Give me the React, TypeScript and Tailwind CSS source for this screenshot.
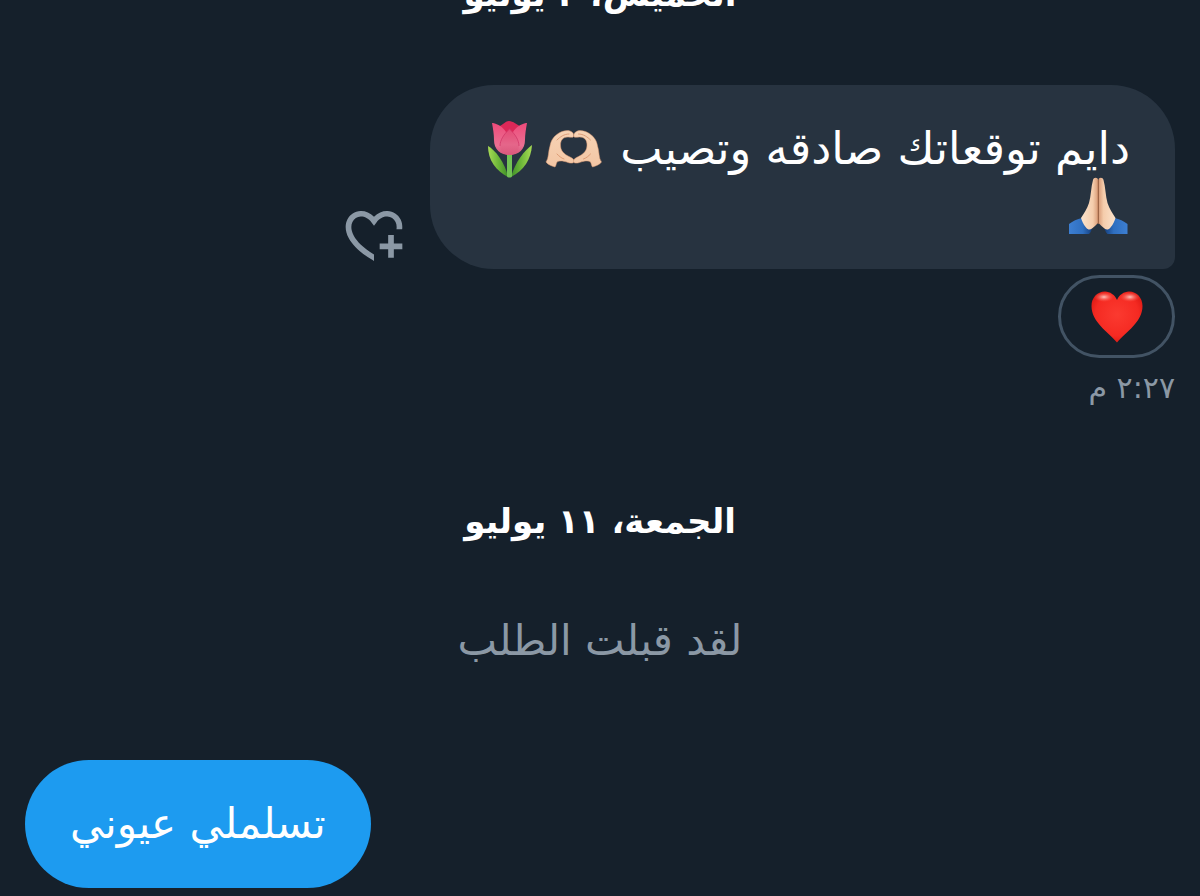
import type { ReactNode } from 'react';

function EmojiBox({ label, children }: { label: string; children: ReactNode }) {
  return (
    <svg
      role="img"
      aria-label={label}
      viewBox="0 2 60 60"
      className="inline-block w-[60px] h-[60px] -my-2 mx-[2px] align-middle overflow-visible"
    >
      {children}
    </svg>
  );
}

function Tulip() {
  return (
    <EmojiBox label="tulip">
      <defs>
        <linearGradient id="petal" x1="0" y1="0" x2="0" y2="1">
          <stop offset="0" stopColor="#e54a76" />
          <stop offset="0.6" stopColor="#e5668a" />
          <stop offset="1" stopColor="#d9587c" />
        </linearGradient>
        <linearGradient id="petalSide" x1="0" y1="0" x2="0" y2="1">
          <stop offset="0" stopColor="#ee4a7a" />
          <stop offset="0.7" stopColor="#ea7092" />
          <stop offset="1" stopColor="#d6557c" />
        </linearGradient>
        <linearGradient id="leafLeft" x1="0" y1="0" x2="1" y2="0">
          <stop offset="0" stopColor="#a8db55" />
          <stop offset="0.5" stopColor="#6fb83a" />
          <stop offset="1" stopColor="#3f8f28" />
        </linearGradient>
        <linearGradient id="leafRight" x1="1" y1="0" x2="0" y2="0">
          <stop offset="0" stopColor="#a8db55" />
          <stop offset="0.5" stopColor="#6fb83a" />
          <stop offset="1" stopColor="#3f8f28" />
        </linearGradient>
      </defs>
      <path d="M8 26C15 30 25 42 28 57 16 51 8 40 8 26z" fill="url(#leafLeft)" />
      <path d="M52 25C45 30 35 42 31 57 44 50 51 40 52 25z" fill="url(#leafRight)" />
      <path d="M27 34h5v22c0 2-5 2-5 0z" fill="#72c255" />
      <path d="M17 7C22 6 25 1 29 1 33 1 37 5 42 7L37 28H22z" fill="#dc2858" />
      <path d="M13 3C18 4 23 7 26 12L30 35C20 35 14 29 14 20 14 14 13 9 12 3z" fill="url(#petalSide)" />
      <path d="M46 3C41 4 36 7 33 12L29 35C39 35 45 29 45 20 45 14 46 9 47 3z" fill="url(#petalSide)" />
      <path d="M29.500 9C35 14 39 20 39 26 39 32 34 35 29.500 35 25 35 20 32 20 26 20 20 24 14 29.500 9z" fill="url(#petal)" />
      <path d="M29.500 9C24 14 20 20 20 26M29.500 9C35 14 39 20 39 26" fill="none" stroke="#d2386a" strokeWidth="0.800" />
    </EmojiBox>
  );
}

function HeartHands() {
  return (
    <EmojiBox label="heart hands">
      <defs>
        <linearGradient id="hand" x1="0" y1="0" x2="0" y2="1">
          <stop offset="0" stopColor="#f6d3b5" />
          <stop offset="1" stopColor="#f3c6a4" />
        </linearGradient>
        <path
          id="halfHands"
          d="M2 42C5 38 4 32 6 26 7 20 10 16 15 13 18 11 23 10 26 11 29 12 30 14 29.500 16.500 29 18 26 17 24 17 19 17 16.500 20 16.500 25 16.500 31 20 34 25 36.500 28 38 30 39 30 41 30 43.500 27 43.500 24 42.500 19 40.500 15 40.500 13 42 12 44 12 46 11 47 8 46 4 45 2 42z"
        />
      </defs>
      <g stroke="#dc9a72" strokeWidth="0.500">
        <use href="#halfHands" fill="url(#hand)" />
        <use href="#halfHands" fill="url(#hand)" transform="translate(59.500 0) scale(-1 1)" />
      </g>
      <g fill="none" stroke="#d58f68" strokeWidth="0.800" strokeLinecap="round">
        <path d="M13 20C16 17 20 14 25 14M13 34C15 36 17 38 20 39" />
        <path d="M46.500 20C43.500 17 39.500 14 34.500 14M46.500 34C44.500 36 42.500 38 39.500 39" />
      </g>
    </EmojiBox>
  );
}

function FoldedHands() {
  return (
    <EmojiBox label="folded hands">
      <defs>
        <linearGradient id="sleeve" x1="0" y1="0" x2="1" y2="0">
          <stop offset="0" stopColor="#3d7fd2" />
          <stop offset="0.600" stopColor="#2f6fc0" />
          <stop offset="1" stopColor="#153f7d" />
        </linearGradient>
        <linearGradient id="palm" x1="0" y1="0" x2="1" y2="0">
          <stop offset="0" stopColor="#fbe3cc" />
          <stop offset="0.700" stopColor="#f5cdac" />
          <stop offset="1" stopColor="#d99c78" />
        </linearGradient>
        <g id="halfPray">
          <path d="M1 47C5 44 9 42 14 41L24 52C23 54 23 55 21 57H1z" fill="url(#sleeve)" />
          <path
            d="M25 3C25.500 0 30 0 30 3V46C28 48 26 50 24 51.500 22 53 20 53 18 50.500 15 47 14 44 13 41 16 36 19 32 21 26 23 19 23 10 25 3z"
            fill="url(#palm)"
          />
        </g>
      </defs>
      <use href="#halfPray" />
      <use href="#halfPray" transform="translate(60.500 0) scale(-1 1)" />
      <path d="M30.250 3v44" stroke="#a8643f" strokeWidth="1" />
    </EmojiBox>
  );
}

function RedHeart() {
  return (
    <svg role="img" aria-label="red heart" viewBox="0 0 52 52" className="w-[52px] h-[52px]">
      <defs>
        <radialGradient id="heart" cx="0.500" cy="0.450" r="0.600">
          <stop offset="0" stopColor="#fb3a30" />
          <stop offset="0.700" stopColor="#f52a22" />
          <stop offset="1" stopColor="#d81712" />
        </radialGradient>
        <radialGradient id="shine">
          <stop offset="0" stopColor="#ffd6cf" stopOpacity="0.900" />
          <stop offset="1" stopColor="#ff5a4c" stopOpacity="0" />
        </radialGradient>
      </defs>
      <path
        d="M26 9C24 4 19 0.500 14 0.500 6 0.500 0.500 7 0.500 15 0.500 31 17 41 26 51.500 35 41 51.500 31 51.500 15 51.500 7 46 0.500 38 0.500 33 0.500 28 4 26 9z"
        fill="url(#heart)"
      />
      <ellipse cx="13" cy="6" rx="10" ry="5" fill="url(#shine)" />
      <ellipse cx="39" cy="6" rx="10" ry="5" fill="url(#shine)" />
    </svg>
  );
}

function DateHeading({ children }: { children: ReactNode }) {
  return <h2 className="text-center text-[34px] leading-[48px] font-bold text-white">{children}</h2>;
}

export default function App() {
  return (
    <main
      dir="rtl"
      lang="ar"
      className="min-h-screen overflow-hidden bg-[#15202b] px-[25px] pb-2 font-['DejaVu_Sans',sans-serif]"
    >
      <div className="-mt-[30px]">
        <DateHeading>الخميس، ٣ يوليو</DateHeading>
      </div>

      {/* Received message */}
      <section className="mt-[67px]">
        <div className="flex items-end gap-[22px]">
          <p className="w-[745px] max-w-full rounded-[64px] rounded-br-[12px] bg-[#273340] px-[45px] py-[35px] text-[45px] leading-[57px] text-white">
            دايم توقعاتك صادقه وتصيب <HeartHands />
            <Tulip />
            <FoldedHands />
          </p>
          <button type="button" aria-label="إضافة تفاعل" className="shrink-0 text-[#8b98a5]">
            <svg viewBox="0 0 24 24" fill="currentColor" className="w-[68px] h-[68px]">
              <path d="M17 12v3h-2.998v2h3v3h2v-3H22v-2h-2.998v-3H17zm-5 6.839c-3.871-2.340-6.053-4.639-7.127-6.609-1.112-2.040-1.031-3.700-.479-4.820.561-1.130 1.667-1.840 2.910-1.910 1.222-.060 2.680.510 3.892 2.160l.806 1.090.805-1.090c1.211-1.650 2.668-2.220 3.890-2.160 1.242.070 2.347.780 2.908 1.910.334.677.490 1.554.321 2.590h2.011c.153-1.283-.039-2.469-.539-3.480-.887-1.790-2.647-2.910-4.601-3.010-1.650-.090-3.367.560-4.796 2.010-1.430-1.450-3.147-2.100-4.798-2.010-1.954.100-3.714 1.220-4.601 3.010-.896 1.810-.846 4.170.514 6.670 1.353 2.480 4.003 5.120 8.382 7.670l.502.299v-2.320z" />
            </svg>
          </button>
        </div>
        <button
          type="button"
          className="mt-[6px] flex h-[83px] w-[117px] items-center justify-center rounded-full border-3 border-[#425364]"
        >
          <RedHeart />
        </button>
        <time className="mt-[10px] block text-[30px] leading-[40px] text-[#8b98a5]">٢:٢٧ م</time>
      </section>

      <div className="mt-[89px]">
        <DateHeading>الجمعة، ١١ يوليو</DateHeading>
      </div>
      <p className="mt-[72px] text-center text-[42px] leading-[48px] text-[#8b98a5]">لقد قبلت الطلب</p>

      {/* Sent message */}
      <section className="mt-[95px] flex justify-end">
        <p className="rounded-[64px] bg-[#1d9bf0] px-[45px] py-[35px] text-[42px] leading-[58px] text-white">
          تسلملي عيوني
        </p>
      </section>
    </main>
  );
}
